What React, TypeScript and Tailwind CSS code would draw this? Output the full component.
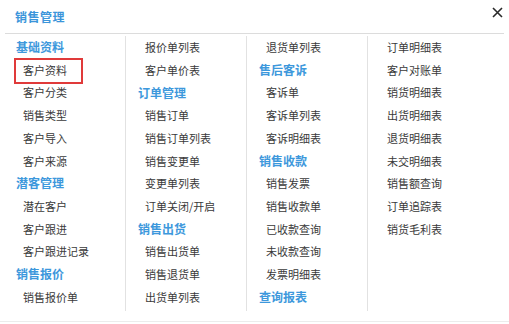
import React from 'react'

type Entry = { label: string; head?: boolean; active?: boolean }

const columns: Entry[][] = [
  [
    { label: '基础资料', head: true },
    { label: '客户资料', active: true },
    { label: '客户分类' },
    { label: '销售类型' },
    { label: '客户导入' },
    { label: '客户来源' },
    { label: '潜客管理', head: true },
    { label: '潜在客户' },
    { label: '客户跟进' },
    { label: '客户跟进记录' },
    { label: '销售报价', head: true },
    { label: '销售报价单' },
  ],
  [
    { label: '报价单列表' },
    { label: '客户单价表' },
    { label: '订单管理', head: true },
    { label: '销售订单' },
    { label: '销售订单列表' },
    { label: '销售变更单' },
    { label: '变更单列表' },
    { label: '订单关闭/开启' },
    { label: '销售出货', head: true },
    { label: '销售出货单' },
    { label: '销售退货单' },
    { label: '出货单列表' },
  ],
  [
    { label: '退货单列表' },
    { label: '售后客诉', head: true },
    { label: '客诉单' },
    { label: '客诉单列表' },
    { label: '客诉明细表' },
    { label: '销售收款', head: true },
    { label: '销售发票' },
    { label: '销售收款单' },
    { label: '已收款查询' },
    { label: '未收款查询' },
    { label: '发票明细表' },
    { label: '查询报表', head: true },
  ],
  [
    { label: '订单明细表' },
    { label: '客户对账单' },
    { label: '销货明细表' },
    { label: '出货明细表' },
    { label: '退货明细表' },
    { label: '未交明细表' },
    { label: '销售额查询' },
    { label: '订单追踪表' },
    { label: '销货毛利表' },
  ],
]

const font = { fontFamily: '"Noto Sans CJK SC", "Noto Sans", sans-serif' }

export default function App() {
  return (
    <div className="w-[509px] h-[322px] bg-white border-b border-[#ececec]" style={font}>
      {/* Header */}
      <div className="h-[33px] flex items-center justify-between pl-[15px] pr-[6px]">
        <span className="text-[12px] font-bold text-[#3b95da] tracking-[0.5px]">销售管理</span>
        <svg width="11" height="11" viewBox="0 0 11 11" className="mb-[8px]">
          <path d="M1 1L10 10M10 1L1 10" stroke="#2a2a2a" strokeWidth="1.6" />
        </svg>
      </div>
      <div className="mx-[5px] border-t border-[#dcdcdc]" />

      {/* Menu columns */}
      <div className="ml-[4px] grid grid-cols-[121px_121px_121px_121px] pt-[2px]">
        {columns.map((col, ci) => (
          <div
            key={ci}
            className={`flex flex-col pb-[3px] ${ci > 0 ? 'border-l border-[#e2e2e2]' : ''}`}
          >
            {col.map((e) =>
              e.head ? (
                <div
                  key={e.label}
                  className="h-[22.7px] flex items-center pl-[12px] text-[12px] font-bold text-[#3d98dc]"
                >
                  {e.label}
                </div>
              ) : (
                <div
                  key={e.label}
                  className="relative h-[22.7px] flex items-center pl-[19px] text-[11px] text-[#3a3a3a]"
                >
                  {e.label}
                  {e.active && (
                    <span className="absolute left-[10px] top-[-1px] w-[69px] h-[26px] border-2 border-[#e03a3a]" />
                  )}
                </div>
              )
            )}
          </div>
        ))}
      </div>
    </div>
  )
}
